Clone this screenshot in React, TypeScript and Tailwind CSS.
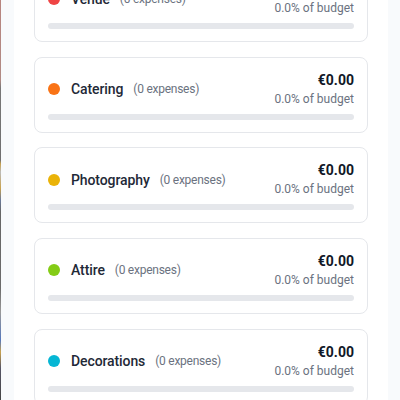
import React from 'react';

interface Category {
  name: string;
  color: string;
  count: number;
  amount: number;
  percent: number;
}

const categories: Category[] = [
  { name: 'Venue', color: 'bg-[#ef4444]', count: 0, amount: 0, percent: 0 },
  { name: 'Catering', color: 'bg-[#f97316]', count: 0, amount: 0, percent: 0 },
  { name: 'Photography', color: 'bg-[#eab308]', count: 0, amount: 0, percent: 0 },
  { name: 'Attire', color: 'bg-[#84cc16]', count: 0, amount: 0, percent: 0 },
  { name: 'Decorations', color: 'bg-[#06b6d4]', count: 0, amount: 0, percent: 0 },
];

const CategoryCard: React.FC<{ category: Category }> = ({ category }) => {
  return (
    <div className="rounded-lg border border-[#e5e7eb] bg-white px-[13px] pt-3 pb-3">
      <div className="flex items-center justify-between">
        <div className="flex items-center pt-0.5">
          <span className={`h-3 w-3 rounded-full ${category.color}`} />
          <span className="ml-[11px] text-sm font-medium tracking-[-0.1px] text-[#1f2937]">{category.name}</span>
          <span className="ml-[10px] text-xs tracking-[-0.25px] text-[#6b7280]">({category.count} expenses)</span>
        </div>
        <div className="text-right">
          <p className="text-sm font-bold text-[#111827]">€{category.amount.toFixed(2)}</p>
          <p className="pt-px text-xs text-[#6b7280]">{category.percent.toFixed(1)}% of budget</p>
        </div>
      </div>
      <div className="mt-[7px] h-1.5 w-full rounded-full bg-[#e5e7eb]">
        <div className="h-1.5 rounded-full bg-[#9ca3af]" style={{ width: `${category.percent}%` }} />
      </div>
    </div>
  );
};

export default function App() {
  return (
    <div className="flex h-[400px] w-[400px] overflow-hidden bg-[#f8fafc] font-['Roboto',sans-serif]">
      <div className="w-px shrink-0 bg-[linear-gradient(to_bottom,#b8857f_0%,#b08a84_20%,#777_22%,#6f6f6f_40%,#c9a24e_41%,#bbb_43%,#c9a24e_47%,#6a7a9a_50%,#666_53%,#6b6b6b_72%,#999_78%,#5577bb_85%,#c9a24e_88%,#556_92%,#444_100%)]" />
      <div className="ml-[13px] w-[374px] shrink-0 bg-white px-5">
        <div className="-mt-[34px] flex flex-col gap-[14.67px]">
          {categories.map((c) => (
            <CategoryCard key={c.name} category={c} />
          ))}
        </div>
      </div>
    </div>
  );
}
